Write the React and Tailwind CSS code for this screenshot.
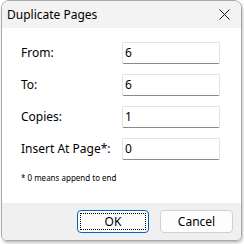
import React from 'react';

const rows = [
  { label: 'From:', value: '6' },
  { label: 'To:', value: '6' },
  { label: 'Copies:', value: '1' },
  { label: 'Insert At Page*:', value: '0' },
];

export default function App() {
  return (
    <div className="w-[244px] h-[244px] bg-white font-['Noto_Sans',sans-serif] text-[12px] text-black">
      <div className="ml-[1px] w-[241px] h-[241px] flex flex-col rounded-t-[8px] rounded-b-[6px] border border-[#a8a8a8] overflow-hidden shadow-[1px_2px_3px_rgba(0,0,0,0.25)]">
        {/* Title bar */}
        <div className="h-[27px] bg-[#f3f3f3] flex items-center justify-between pl-[5px] pr-[11px]">
          <span className="text-[12px] leading-none">Duplicate Pages</span>
          <svg width="11" height="11" viewBox="0 0 11 11" className="text-[#1a1a1a]">
            <path d="M0.5 0.5 L10.5 10.5 M10.5 0.5 L0.5 10.5" stroke="currentColor" strokeWidth="1" />
          </svg>
        </div>

        {/* Body */}
        <div className="flex-1 bg-white pl-[19px] pt-[14px] flex flex-col">
          <div className="flex flex-col gap-[10px]">
            {rows.map(r => (
              <div key={r.label} className="flex items-center h-[22px]">
                <span className="w-[101px]">{r.label}</span>
                <div className="w-[98px] h-[22px] bg-white border border-[#e3e3e3] border-b-[#8a8a8a] rounded-[2px] flex items-center pl-[2px]">
                  {r.value}
                </div>
              </div>
            ))}
          </div>
          <div className="mt-[14px] text-[8px] leading-none">* 0 means append to end</div>
        </div>

        {/* Footer */}
        <div className="h-[37px] bg-[#f0f0f0] flex items-center justify-end gap-[11px] pr-[8px]">
          <button className="w-[72px] h-[23px] rounded-[4px] border border-[#0067c0] bg-[#fdfdfd] p-[2px]">
            <div className="w-full h-full border border-dotted border-black flex items-center justify-center">OK</div>
          </button>
          <button className="w-[73px] h-[23px] rounded-[4px] border border-[#d0d0d0] bg-[#fdfdfd] flex items-center justify-center">
            Cancel
          </button>
        </div>
      </div>
    </div>
  );
}
